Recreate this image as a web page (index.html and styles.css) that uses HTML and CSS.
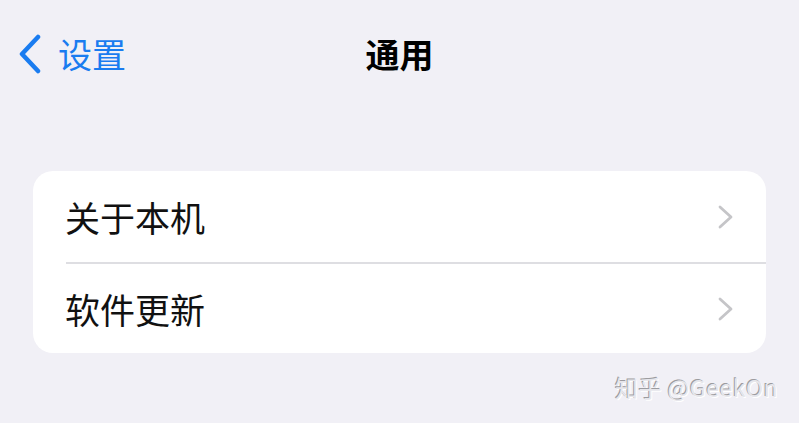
FILE: index.html
```html
<!DOCTYPE html>
<html lang="zh-CN">

<head>
    <meta charset="UTF-8">
    <meta name="viewport" content="width=device-width, initial-scale=1.0">
    <title>通用</title>
    <link rel="stylesheet" href="styles.css">
</head>

<body>
    <div class="nav-bar">
        <a class="back" href="#">
            <svg class="back-icon" width="24" height="40" viewBox="0 0 24 40">
                <path d="M20 3 L4 20 L20 37" fill="none" stroke="#1a7cf0" stroke-width="4.5" stroke-linecap="round" stroke-linejoin="round" />
            </svg>
            <span>设置</span>
        </a>
        <h1 class="title">通用</h1>
    </div>

    <div class="group">
        <div class="row">
            <span class="row-label">关于本机</span>
            <svg class="chevron" width="18" height="26" viewBox="0 0 18 26">
                <path d="M3 3 L14 13 L3 23" fill="none" stroke="#c5c5c8" stroke-width="2.8" stroke-linecap="round" stroke-linejoin="round" />
            </svg>
        </div>
        <div class="row">
            <span class="row-label">软件更新</span>
            <svg class="chevron" width="18" height="26" viewBox="0 0 18 26">
                <path d="M3 3 L14 13 L3 23" fill="none" stroke="#c5c5c8" stroke-width="2.8" stroke-linecap="round" stroke-linejoin="round" />
            </svg>
        </div>
    </div>

    <div class="watermark">知乎 @GeekOn</div>
</body>

</html>
```

FILE: styles.css
```css
body {
    margin: 0;
    width: 799px;
    height: 423px;
    overflow: hidden;
    background-color: #f1f0f6;
    font-family: "Noto Sans CJK SC", "Noto Sans", sans-serif;
    position: relative;
}

.nav-bar {
    position: relative;
    height: 110px;
    display: flex;
    align-items: flex-start;
    padding-top: 34px;
    box-sizing: border-box;
}

.back {
    display: flex;
    align-items: center;
    gap: 16px;
    margin-left: 18px;
    color: #1a7cf0;
    text-decoration: none;
    font-size: 34px;
    line-height: 40px;
}

.title {
    position: absolute;
    left: 0;
    right: 0;
    top: 34px;
    margin: 0;
    text-align: center;
    font-size: 34px;
    line-height: 40px;
    font-weight: 700;
    color: #000;
}

.group {
    margin: 61px 33px 0 33px;
    background-color: #fff;
    border-radius: 20px;
    overflow: hidden;
}

.row {
    height: 91px;
    margin-left: 33px;
    padding-right: 31px;
    display: flex;
    align-items: center;
    justify-content: space-between;
    box-sizing: border-box;
}

.row + .row {
    border-top: 2px solid #dedee2;
}

.row-label {
    font-size: 35px;
    color: #111;
    margin-left: -1px;
}

.chevron {
    display: block;
}

.watermark {
    position: absolute;
    right: 21px;
    bottom: 19px;
    font-size: 23px;
    color: #e6e6eb;
    letter-spacing: 0.5px;
    text-shadow: -1px -1px 0 #9c9ca0, 1px 1px 0 #fff;
}
```
